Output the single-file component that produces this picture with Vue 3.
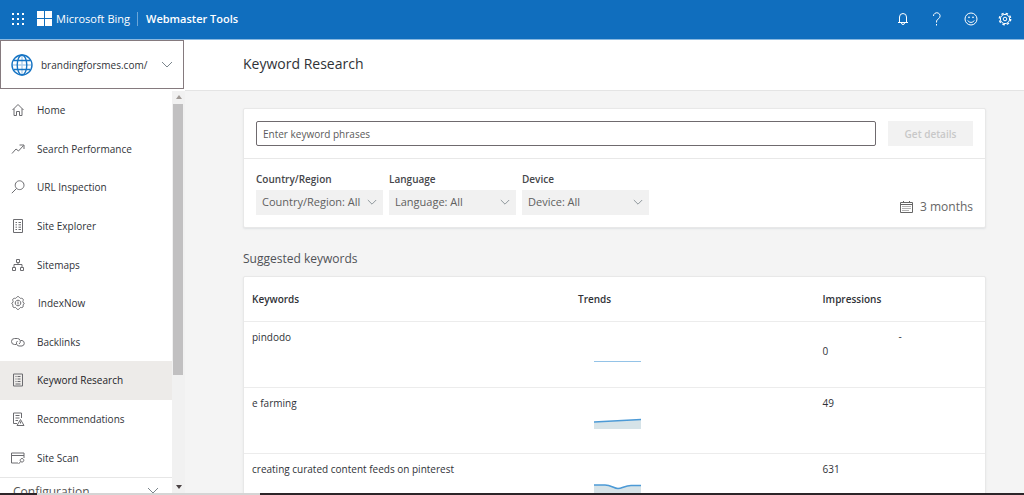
<script setup>
import { ref } from 'vue'

const keyword = ref('')

const navItems = [
  { label: 'Home', icon: 'home' },
  { label: 'Search Performance', icon: 'trend' },
  { label: 'URL Inspection', icon: 'search' },
  { label: 'Site Explorer', icon: 'explorer' },
  { label: 'Sitemaps', icon: 'sitemap' },
  { label: 'IndexNow', icon: 'indexnow' },
  { label: 'Backlinks', icon: 'link' },
  { label: 'Keyword Research', icon: 'doc', active: true },
  { label: 'Recommendations', icon: 'recommend' },
  { label: 'Site Scan', icon: 'scan' },
]

const icons = {
  home: 'M1.5 7 L7 1.5 L12.5 7 M3 5.7 V12.5 H5.5 V8.5 H8.5 V12.5 H11 V5.7',
  trend: 'M1 11.5 L5 7 L7.5 9 L12.5 3.5 M8.5 3 H13 V7',
  search: 'M5.6 8.4 L.8 13.2 M8.6 .8 a4.4 4.4 0 1 0 .01 0 Z',
  explorer: 'M2.5 .5 H11.5 V13.5 H2.5 Z M4.5 3.5 H6 M7.5 3.5 H10 M4.500 5.8 H6 M7.5 5.8 H10 M4.5 8.2 H6 M7.5 8.2 H10 M4.5 10.5 H6 M7.5 10.5 H10',
  sitemap: 'M5.5 1.5 H8.5 V4.5 H5.5 Z M1.5 9.5 H4.5 V12.5 H1.5 Z M9.5 9.5 H12.5 V12.5 H9.5 Z M7 4.5 V6.5 M3 9.5 V6.5 H11 V9.5',
  indexnow: 'M7 .5 C8.2 .5 8.600 2.200 9.600 2.400 C10.800 2 12.300 2.600 12.300 3.800 C12.300 4.800 11.500 5.500 12 6.300 C13.600 7 13.600 8 12.200 8.600 C11.800 9.500 12.500 10.200 12 11 C11.200 12 10.200 11.400 9.400 11.500 C8.600 12 8.200 13.500 7 13.500 C5.800 13.500 5.400 12 4.600 11.500 C3.800 11.400 2.800 12 2 11 C1.500 10.200 2.200 9.500 1.800 8.600 C.4 8 .4 7 2 6.300 C2.500 5.500 1.700 4.800 1.700 3.800 C1.700 2.600 3.200 2 4.400 2.400 C5.400 2.200 5.800 .5 7 .5 Z M7 4.200 a2.800 2.800 0 1 0 .01 0 Z M7 5.500 V8.500',
  link: 'M5 9.500 H3.500 A3 3 0 0 1 3.500 3.500 H6.500 A3 3 0 0 1 8 9 M9.500 5.500 H11 A2.800 2.800 0 0 1 11 11 H8 A2.800 2.800 0 0 1 6.500 6',
  doc: 'M2.5 1 H11.5 V13 H2.5 Z M4.5 3.5 H5.5 M6.5 3.5 H9.5 M4.5 6 H5.5 M6.5 6 H9.5 M4.5 8.5 H5.5 M6.5 8.5 H9.5 M4.5 11 H9.5',
  recommend: 'M6 11.5 H2.5 V1 H10.5 V6 M4.5 3.5 H8.5 M4.5 6 H8.5 M4.5 8.5 H7 M9.5 7.5 L13 13.5 H6 Z M9.5 9.5 V11.5',
  scan: 'M7 12 H.5 V2 H13 V7 M.5 4.500 H13 M11 7.5 a1.8 1.8 0 1 0 .01 0 Z M9.7 10.5 L7.5 13',
}

const filters = [
  { id: 'country', label: 'Country/Region', value: 'Country/Region: All' },
  { id: 'language', label: 'Language', value: 'Language: All' },
  { id: 'device', label: 'Device', value: 'Device: All' },
]

const rows = [
  { keyword: 'pindodo', line: 'M0 9.5 H47', area: '', impressions: '0', note: '-' },
  { keyword: 'e farming', line: 'M0 4 L47 1.5', area: 'M0 4 L47 1.5 V11 H0 Z', impressions: '49' },
  {
    keyword: 'creating curated content feeds on pinterest',
    line: 'M0 1 H11 C17 1 20 4.5 24 4.5 C28 4.5 31 1.5 37 1.5 H47',
    area: 'M0 1 H11 C17 1 20 4.5 24 4.5 C28 4.5 31 1.5 37 1.5 H47 V12 H0 Z',
    impressions: '631',
  },
]
</script>

<template>
  <div class="page">
    <header class="topbar">
      <button class="icon-btn waffle" aria-label="Apps">
        <svg width="12" height="12" viewBox="0 0 12 12" fill="currentColor">
          <template v-for="y in 3" :key="y">
            <rect v-for="x in 3" :key="x" :x="(x - 1) * 5" :y="(y - 1) * 5" width="2" height="2" />
          </template>
        </svg>
      </button>
      <a class="brand" href="#">
        <svg width="15" height="15" viewBox="0 0 15 15" fill="#fff">
          <path d="M0 0H7V7H0Z M8 0H15V7H8Z M0 8H7V15H0Z M8 8H15V15H8Z" />
        </svg>
        <span>Microsoft Bing</span>
      </a>
      <span class="product">Webmaster Tools</span>
      <div class="actions">
        <button class="icon-btn" aria-label="Notifications">
          <svg width="14" height="14" viewBox="0 0 14 14" class="stroke">
            <path d="M3.5 10.5 V5 A3.5 3.5 0 0 1 10.5 5 V10.5 M2 10.5 H12 M5.5 11 A1.5 1.5 0 0 0 8.5 11" />
          </svg>
        </button>
        <button class="icon-btn" aria-label="Help">
          <svg width="14" height="14" viewBox="0 0 14 14" class="stroke">
            <path d="M3.500 4 A3.300 3.200 0 1 1 8.800 6.500 C7.200 7.700 6.500 8 6.500 10.500 M6.500 12 V13.500" />
          </svg>
        </button>
        <button class="icon-btn" aria-label="Feedback">
          <svg width="14" height="14" viewBox="0 0 14 14" class="stroke">
            <circle cx="7" cy="7" r="6" />
            <path d="M3.8 8.5 C5 11 9 11 10.2 8.5" />
            <circle cx="5" cy="5.3" r=".5" /><circle cx="9" cy="5.3" r=".5" />
          </svg>
        </button>
        <button class="icon-btn" aria-label="Settings">
          <svg width="14" height="14" viewBox="0 0 14 14" class="stroke">
            <circle cx="7" cy="7" r="5.7" stroke-width="1.4" stroke-dasharray="2.4 2.077" />
            <circle cx="7" cy="7" r="4.6" /><circle cx="7" cy="7" r="1.8" />
          </svg>
        </button>
      </div>
    </header>

    <div class="body">
      <aside class="sidebar">
        <button class="site">
          <svg width="22" height="22" viewBox="0 0 22 22" fill="none" stroke="#1674c4" stroke-width="1.4">
            <circle cx="11" cy="11" r="10" /><ellipse cx="11" cy="11" rx="4.8" ry="10" />
            <path d="M2.5 6.5 H19.5 M2.5 15.5 H19.5" /><path d="M11 1 V21 M1 11 H21" stroke-opacity=".35" />
          </svg>
          <span>brandingforsmes.com/</span>
          <svg class="chevron" width="12" height="8" viewBox="0 0 12 8"><path d="M1 1 L6 6 L11 1" /></svg>
        </button>
        <div class="nav-wrap">
          <nav class="nav">
            <ul>
              <li v-for="item in navItems" :key="item.label">
                <a href="#" :class="{ active: item.active, roomy: item.icon === 'indexnow' }">
                  <svg width="14" height="14" viewBox="0 0 14 14"><path :d="icons[item.icon]" /></svg>
                  <span>{{ item.label }}</span>
                </a>
              </li>
            </ul>
            <button class="group">
              <span>Configuration</span>
              <svg class="chevron" width="12" height="8" viewBox="0 0 12 8"><path d="M1 1 L6 6 L11 1" /></svg>
            </button>
          </nav>
          <div class="scroll" aria-hidden="true">
            <svg width="6" height="4" viewBox="0 0 6 4" fill="#a09a96"><path d="M0 4 L3 0 L6 4Z" /></svg>
            <div class="track"><div class="thumb"></div></div>
            <svg width="6" height="4" viewBox="0 0 6 4" fill="#4a4244"><path d="M0 0 H6 L3 4Z" /></svg>
          </div>
        </div>
      </aside>

      <main class="main">
        <div class="title"><h1>Keyword Research</h1></div>
        <div class="content">
          <form class="card" @submit.prevent>
            <div class="query">
              <input v-model="keyword" type="text" aria-label="Keyword phrases" placeholder="Enter keyword phrases" />
              <button type="submit" disabled>Get details</button>
            </div>
            <div class="filters">
              <div v-for="f in filters" :key="f.id" class="filter">
                <label :for="f.id">{{ f.label }}</label>
                <div class="select">
                  <select :id="f.id"><option>{{ f.value }}</option></select>
                  <svg class="chevron" width="10" height="7" viewBox="0 0 12 8"><path d="M1 1 L6 6 L11 1" /></svg>
                </div>
              </div>
              <button type="button" class="range">
                <svg width="13" height="12" viewBox="0 0 13 12" fill="none" stroke="#666">
                  <path d="M.5 1.5 H12.5 V11.5 H.5 Z M.5 3.5 H12.5 M3.5 0 V2 M9.5 0 V2" />
                  <path d="M2.5 5.5 H11 M2.5 7.5 H11 M2.5 9.5 H9" stroke-dasharray="1 1" />
                </svg>
                <span>3 months</span>
              </button>
            </div>
          </form>

          <h2>Suggested keywords</h2>
          <div class="card results">
            <table>
              <thead>
                <tr>
                  <th class="c-key" scope="col">Keywords</th>
                  <th class="c-trend" scope="col">Trends</th>
                  <th scope="col">Impressions</th>
                </tr>
              </thead>
              <tbody>
                <tr v-for="r in rows" :key="r.keyword">
                  <td>{{ r.keyword }}</td>
                  <td>
                    <svg class="spark" width="47" height="12" viewBox="0 0 47 12">
                      <path v-if="r.area" :d="r.area" fill="#d6e3e8" />
                      <path :d="r.line" fill="none" stroke="#4c9ad6" :stroke-width="r.area ? 1.5 : 0.6" />
                    </svg>
                  </td>
                  <td>
                    <div v-if="r.note" class="note">{{ r.note }}</div>
                    {{ r.impressions }}
                  </td>
                </tr>
              </tbody>
            </table>
          </div>
        </div>
      </main>
    </div>
    <div class="edge" aria-hidden="true"><span></span><span></span><span></span></div>
  </div>
</template>

<style>
html, body { margin: 0; overflow: hidden; }
</style>

<style scoped>
* { box-sizing: border-box; }
.page {
  height: 100vh;
  display: flex;
  flex-direction: column;
  overflow: hidden;
  background: #f4f4f4;
  color: #303237;
  font: 10px/16px "Open Sans", "Noto Sans", sans-serif;
}
button, input, select { font: inherit; color: inherit; border: 0; margin: 0; border-radius: 0; }
button { background: none; padding: 0; text-align: left; }
a { color: inherit; text-decoration: none; }
svg { display: block; flex: none; }
.chevron { fill: none; stroke: #7b858c; stroke-width: 1; }

.topbar {
  flex: none;
  height: 40px;
  display: flex;
  align-items: center;
  padding: 0 12px 2px 11px;
  background: #106ebe;
  border-bottom: 1px solid #8ab9e0;
  color: #fff;
}
.icon-btn { display: flex; justify-content: center; width: 14px; }
.stroke { fill: none; stroke: currentColor; stroke-width: 1; }
.waffle { margin-right: 12px; }
.brand { display: flex; align-items: center; gap: 4px; font-size: 11px; font-weight: 500; }
.product {
  margin-left: 7px;
  padding-left: 8px;
  border-left: 1px solid #6ba6d8;
  font-size: 11px;
  line-height: 14px;
  font-weight: 600;
}
.actions { margin-left: auto; display: flex; gap: 20px; }

.body { flex: 1; min-height: 0; display: flex; }
.sidebar { flex: none; width: 185px; display: flex; flex-direction: column; background: #fff; }
.site {
  flex: none;
  height: 49px;
  margin-right: 1px;
  padding: 0 10px;
  display: flex;
  align-items: center;
  gap: 8px;
  border: 1px solid #857a7e;
  background: #fff;
}
.site .chevron { margin-left: auto; }
.nav-wrap { flex: 1; min-height: 0; display: flex; padding-top: 2px; }
.nav { flex: 1; display: flex; flex-direction: column; overflow: hidden; }
ul { flex: 1; display: flex; flex-direction: column; margin: 0; padding: 0; list-style: none; }
li { flex: 1; display: flex; }
li a { flex: 1; display: flex; align-items: center; gap: 12px; padding-left: 11px; }
li a.roomy { gap: 13px; }
li svg { fill: none; stroke: #6c6c70; stroke-width: 1; }
li a.active { background: #edebe9; color: #222226; }
.group {
  flex: none;
  height: 16px;
  display: flex;
  align-items: flex-start;
  padding: 6px 13px 0;
  border-top: 1px solid #e6e6e6;
  color: #555;
  font-size: 12px;
  overflow: hidden;
}
.group .chevron { margin: 3px 0 0 auto; }
.scroll {
  flex: none;
  width: 13px;
  display: flex;
  flex-direction: column;
  align-items: center;
  gap: 5px;
  padding: 4px 0;
  background: #f1f1f1;
}
.track { flex: 1; align-self: stretch; padding: 0 2px 0 1px; }
.thumb { height: 72%; background: #c1c0c1; }

.main { flex: 1; min-width: 0; display: flex; flex-direction: column; }
.title {
  flex: none;
  height: 51px;
  display: flex;
  align-items: center;
  padding: 0 58px 2px;
  background: #fff;
  border-bottom: 1px solid #e4e4e4;
}
h1 { margin: 0; font-size: 14px; line-height: 20px; font-weight: 400; }
.content { flex: 1; min-height: 0; overflow: hidden; padding: 17px 38px 0 58px; }
.card { background: #fff; border: 1px solid #e8e8e8; border-radius: 2px; box-shadow: 0 1px 2px #dfe2e4; }
.query { display: flex; gap: 12px; padding: 12px; border-bottom: 1px solid #e8e8e8; }
.query input {
  flex: 1;
  min-width: 0;
  height: 25px;
  padding: 0 6px;
  border: 1px solid #6f6a6e;
  border-radius: 2px;
  background: #fff;
  outline: none;
}
.query input::placeholder { color: #5a5a5a; opacity: 1; }
.query button { width: 85px; background: #f2f2f2; color: #c8c8c8; font-weight: 600; text-align: center; }
.filters { display: flex; gap: 6px; padding: 12px; }
.filter { width: 127px; }
.filter label { display: block; margin-bottom: 3px; font-size: 10px; font-weight: 600; color: #45464a; }
.select { position: relative; }
.select select {
  display: block;
  width: 100%;
  height: 25px;
  padding: 0 20px 2px 6px;
  appearance: none;
  background: #f1f1f1;
  color: #606060;
  font-size: 11px;
}
.select .chevron { position: absolute; right: 6px; top: 9px; pointer-events: none; }
.range { margin-left: auto; align-self: flex-end; display: flex; align-items: center; gap: 7px; color: #666; font-size: 12px; }
h2 { margin: 21px 0 7px; font-size: 12px; line-height: 20px; font-weight: 400; color: #505257; }
table { width: 100%; table-layout: fixed; border-collapse: collapse; }
th, td { padding: 0 8px; text-align: left; }
th { height: 44px; font-weight: 600; }
td { height: 66px; padding-top: 7px; vertical-align: top; border-top: 1px solid #ececec; }
.c-key { width: 44%; }
.c-trend { width: 33%; }
.spark { margin: 23px 0 0 16px; }
.note { padding-left: 76px; line-height: 14px; }

.edge { flex: none; height: 2px; display: flex; background: #2c2529; }
.edge span:nth-child(1) { width: 37px; }
.edge span:nth-child(2) { width: 223px; background: #d5d5d5; }
</style>
